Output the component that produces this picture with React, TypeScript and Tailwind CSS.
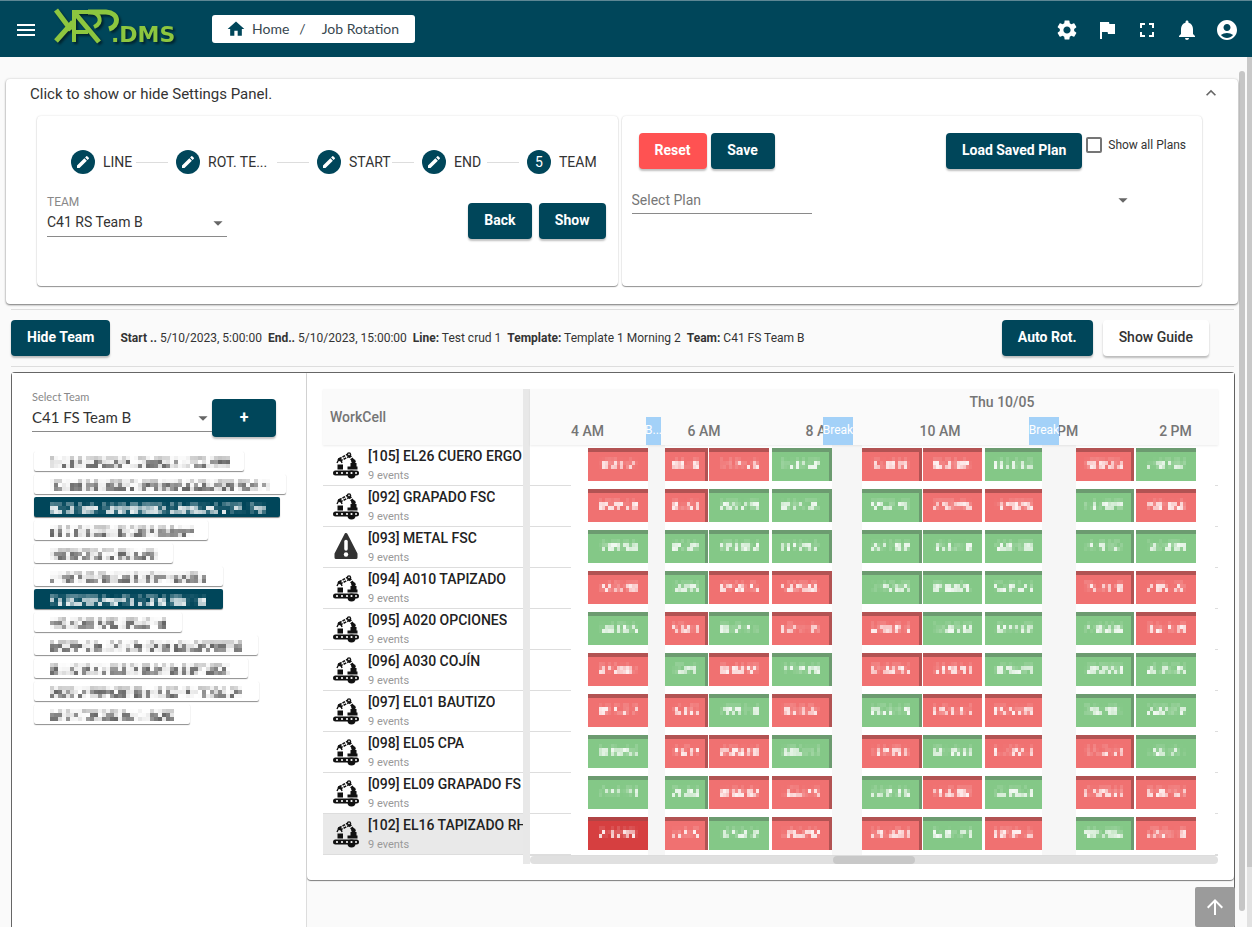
import React, { useState } from 'react';
import {
  MdMenu,
  MdHome,
  MdSettings,
  MdFlag,
  MdFullscreen,
  MdNotifications,
  MdAccountCircle,
  MdEdit,
  MdKeyboardArrowUp,
  MdArrowDropDown,
  MdArrowUpward,
} from 'react-icons/md';
import clsx from 'clsx';

type Step = { label: string; width: string; labelWidth: string };
type WorkCell = { code: string; name: string; events: string; warning?: boolean; selected?: boolean };
type Worker = { width: string; chars: number; active?: boolean };

const steps: Step[] = [
  { label: 'LINE', width: 'w-[105px]', labelWidth: 'w-[33px]' },
  { label: 'ROT. TE...', width: 'w-[141px]', labelWidth: 'w-[69px]' },
  { label: 'START', width: 'w-[105px]', labelWidth: 'w-[43px]' },
  { label: 'END', width: 'w-[105px]', labelWidth: 'w-[33px]' },
  { label: 'TEAM', width: '', labelWidth: '' },
];

// one letter per event, R = red, G = green, S = selected
const workCells: WorkCell[] = [
  { code: '105', name: 'EL26 CUERO ERGO', events: 'RRRGRRGRG' },
  { code: '092', name: 'GRAPADO FSC', events: 'RRGGGRRGR' },
  { code: '093', name: 'METAL FSC', events: 'GGGGGGGGG', warning: true },
  { code: '094', name: 'A010 TAPIZADO', events: 'RGRRGGGRR' },
  { code: '095', name: 'A020 OPCIONES', events: 'GRGRRGGGR' },
  { code: '096', name: 'A030 COJÍN', events: 'RGRGRRGGG' },
  { code: '097', name: 'EL01 BAUTIZO', events: 'RRGRGRRGG' },
  { code: '098', name: 'EL05 CPA', events: 'GRRGRGRRG' },
  { code: '099', name: 'EL09 GRAPADO FS', events: 'GGRRGRGRR' },
  { code: '102', name: 'EL16 TAPIZADO RH', events: 'SRGRRGRGR', selected: true },
];

const workers: Worker[] = [
  { width: 'w-[210px]', chars: 45 },
  { width: 'w-[252px]', chars: 55 },
  { width: 'w-[246px]', chars: 54, active: true },
  { width: 'w-[174px]', chars: 36 },
  { width: 'w-[139px]', chars: 27 },
  { width: 'w-[189px]', chars: 39 },
  { width: 'w-[189px]', chars: 39, active: true },
  { width: 'w-[148px]', chars: 29 },
  { width: 'w-[224px]', chars: 48 },
  { width: 'w-[214px]', chars: 45 },
  { width: 'w-[225px]', chars: 48 },
  { width: 'w-[156px]', chars: 31 },
];

const hours = ['4 AM', '6 AM', '8 AM', '10 AM', '12 PM', '2 PM'];

const breaks = [
  { label: 'B...', start: 116, size: 15 },
  { label: 'Break', start: 293, size: 30 },
  { label: 'Break', start: 499, size: 30 },
];

// timeline slots: -1 = empty, -2 = break, otherwise event index
const slots = [-1, 0, -2, 1, -1, 2, -1, 3, -2, 4, -1, 5, -1, 6, -2, 7, -1, 8, -1];

const noise = (n: number) => {
  const x = Math.sin(n * 12.9898) * 43758.5453;
  return x - Math.floor(x);
};

// Masked personal data, drawn as a mosaic of small blocks
const Mosaic = ({ cols, seed, dense }: { cols: number; seed: number; dense?: boolean }) => {
  const width = dense ? 4 : 3;
  const height = 4;
  const blocks = [];
  for (let c = 0; c < cols; c++) {
    const gap = noise(seed * 31 + c * 5) < 0.25;
    for (let r = 0; r < 3; r++) {
      const n = noise(seed * 97 + c * 7 + r * 3 + 1);
      let opacity = n > 0.4 ? 0.35 + n * 0.55 : n * 0.6;
      if (gap) opacity = n * 0.15;
      if (r === 0) opacity *= dense ? 0.4 : 0.15;
      blocks.push(
        <rect key={`${c}-${r}`} x={c * width} y={r * height} width={width} height={height} fill="currentColor" opacity={opacity} />
      );
    }
  }
  return (
    <svg width={cols * width} height={3 * height} shapeRendering="crispEdges" aria-hidden="true">
      {blocks}
    </svg>
  );
};

const Logo = () => (
  <svg width="128" height="42" viewBox="0 0 128 42" className="ml-4 drop-shadow-[2px_2px_1px_rgba(0,0,0,0.5)]" role="img" aria-label="KAPP.DMS">
    <g fill="none" stroke="#8dc63f">
      <path d="M2 2 L17 22 M2 33 L19 14" strokeWidth="5" />
      <path d="M20 34 V4" strokeWidth="4" />
      <path d="M20 4 L45 34" strokeWidth="5" />
      <path d="M21 24 H34" strokeWidth="4" />
      <path d="M18 4 H36 C47 5 49 15 40 19" strokeWidth="4" />
      <path d="M34 4 H52 C66 5 65 18 55 21" strokeWidth="5" />
    </g>
    <text x="57" y="34" fill="#8dc63f" fontFamily="'DejaVu Sans', sans-serif" fontWeight="700" fontSize="22">.DMS</text>
  </svg>
);

const RobotIcon = () => (
  <svg width="28" height="28" viewBox="0 0 28 28" aria-hidden="true">
    <g fill="none" stroke="#111" strokeWidth="1.6">
      <path d="M7 8 L16 3 M8 10 L17 5.5" strokeDasharray="3 1" />
      <path d="M17 4 L22 11" strokeWidth="3" strokeDasharray="3 1" />
      <path d="M7 8 L5 12 M9 9 L10 12" strokeWidth="1.4" />
    </g>
    <circle cx="17" cy="3.4" r="2.2" fill="#111" />
    <circle cx="17" cy="3.4" r="0.8" fill="#fff" />
    <circle cx="7.5" cy="8.5" r="1.8" fill="#111" />
    <circle cx="21.5" cy="10.5" r="2.2" fill="#111" />
    <path d="M18.5 12 h6 v3.5 h1 v3 H15.5 v-3 h3z M5.5 13.5 h5.5 v5 h-5.5z" fill="#111" />
    <rect x="1" y="19.5" width="26" height="5" rx="2.5" fill="#111" />
    <circle cx="19.5" cy="23.5" r="4" fill="#111" />
    <g fill="#fff">
      <circle cx="5" cy="22" r="1.1" />
      <circle cx="10" cy="22" r="1.1" />
      <circle cx="15" cy="22" r="1.1" />
      <circle cx="19.5" cy="22" r="1.1" />
      <circle cx="24" cy="22" r="1" />
    </g>
  </svg>
);

const WarningIcon = () => (
  <svg width="28" height="29" viewBox="0 0 28 29" aria-hidden="true">
    <path d="M14 1.5 L24 21 V24.5 H4 V21 Z" fill="#333" stroke="#333" strokeWidth="3" strokeLinejoin="round" />
    <path d="M14 8.5 V16" stroke="#fff" strokeWidth="3.5" strokeLinecap="round" />
    <circle cx="14" cy="21.5" r="2.2" fill="#fff" />
  </svg>
);

type ButtonProps = { children: React.ReactNode; className?: string; onClick?: () => void };

const Button = ({ children, className = 'bg-[#00465a] text-white font-bold', onClick }: ButtonProps) => (
  <button
    type="button"
    onClick={onClick}
    className={clsx('h-9 min-w-16 shrink-0 rounded px-4 pb-0.5 text-sm whitespace-nowrap shadow-[0_2px_2px_rgba(0,0,0,0.25)]', className)}
  >
    {children}
  </button>
);

const Header = () => (
  <header className="flex h-[57px] shrink-0 items-center border-t border-[#5d8794] bg-[#00465a] pr-[13px] pl-3.5 text-white">
    <button type="button" aria-label="Menu" className="pt-0.5"><MdMenu size={24} /></button>
    <Logo />
    <nav className="ml-[30px] flex h-7 items-center rounded-[3px] bg-white pr-4 pl-3.5 font-[Lato,sans-serif] text-sm text-[#37474f]">
      <MdHome size={20} className="mr-1.5 text-[#00465a]" />
      <a href="#home">Home</a>
      <span className="ml-2.5">/</span>
      <span className="ml-4">Job Rotation</span>
    </nav>
    <div className="ml-auto flex items-center gap-4 pt-0.5">
      <button type="button" aria-label="Settings"><MdSettings size={24} /></button>
      <button type="button" aria-label="Flag"><MdFlag size={24} /></button>
      <button type="button" aria-label="Full screen"><MdFullscreen size={24} /></button>
      <button type="button" aria-label="Notifications"><MdNotifications size={24} /></button>
      <button type="button" aria-label="Account"><MdAccountCircle size={24} /></button>
    </div>
  </header>
);

const Stepper = () => (
  <ol className="flex pl-6">
    {steps.map((step, i) => (
      <li key={step.label} className={clsx('flex items-center', step.width)}>
        <span className="mr-2 flex size-6 shrink-0 items-center justify-center rounded-full bg-[#00465a] text-sm text-white">
          {i < 4 ? <MdEdit size={16} /> : 5}
        </span>
        <span className={clsx('shrink-0 text-sm whitespace-nowrap', step.labelWidth)}>{step.label}</span>
        {i < 4 && <span className="mr-2 h-px flex-1 bg-[#ddd]" />}
      </li>
    ))}
  </ol>
);

const SettingsPanel = () => {
  const [showAll, setShowAll] = useState(false);
  const panel = 'h-[170px] flex-1 rounded bg-white px-2.5 shadow-[0_1px_1px_rgba(0,0,0,0.4),0_0_2px_rgba(0,0,0,0.15)]';

  return (
    <section className="mt-[22px] mr-px ml-1.5 rounded bg-white pr-9 pb-[18px] pl-[31px] shadow-[0_1px_2px_rgba(0,0,0,0.5),0_0_3px_rgba(0,0,0,0.12)]">
      <button type="button" className="-ml-[7px] flex h-[37px] w-[calc(100%+26px)] items-start justify-between pt-1 text-left text-[15px]">
        <span>Click to show or hide Settings Panel.</span>
        <MdKeyboardArrowUp size={20} className="text-[#666]" />
      </button>
      <div className="flex gap-1">
        <div className={clsx(panel, 'pt-[34px]')}>
          <Stepper />
          <div className="mt-4 flex items-start justify-between">
            <div className="relative w-[180px] border-b border-[#8a8a8a]">
              <label htmlFor="team" className="block pt-1 text-xs text-[#888]">TEAM</label>
              <select id="team" className="h-6 w-full appearance-none bg-transparent pb-1 text-sm">
                <option>C41 RS Team B</option>
              </select>
              <MdArrowDropDown size={22} className="pointer-events-none absolute -right-0.5 bottom-0.5 text-[#666]" />
            </div>
            <div className="mt-[13px] mr-0.5 flex gap-[7px]">
              <Button>Back</Button>
              <Button>Show</Button>
            </div>
          </div>
        </div>

        <div className={clsx(panel, 'pt-[17px]')}>
          <div className="flex items-start gap-1 pr-1.5 pl-[7px]">
            <Button className="bg-[#ff5252] font-bold text-white">Reset</Button>
            <Button>Save</Button>
            <Button className="ml-auto bg-[#00465a] font-bold text-white">Load Saved Plan</Button>
            <label className="mt-1 flex items-center gap-1.5 text-xs whitespace-nowrap">
              <input
                type="checkbox"
                checked={showAll}
                onChange={(e) => setShowAll(e.target.checked)}
                className="size-4 appearance-none rounded-xs border-2 border-[#757575] checked:bg-[#00465a]"
              />
              Show all Plans
            </label>
          </div>
          <div className="relative mt-[19px] w-[508px] max-w-full">
            <select aria-label="Select Plan" className="h-6 w-full appearance-none bg-transparent pb-0.5 text-sm text-[#777]">
              <option>Select Plan</option>
            </select>
            <div className="h-px w-[180px] bg-[#8a8a8a]" />
            <MdArrowDropDown size={22} className="pointer-events-none absolute right-1.5 bottom-[3px] text-[#666]" />
          </div>
        </div>
      </div>
    </section>
  );
};

const InfoBar = () => (
  <section className="mt-[5px] mr-[5px] ml-[11px] flex h-[58px] items-center border-y border-[#ddd]">
    <Button>Hide Team</Button>
    <p className="ml-2.5 flex gap-1.5 text-xs whitespace-nowrap">
      <span><b>Start ..</b> 5/10/2023, 5:00:00</span>
      <span><b>End..</b> 5/10/2023, 15:00:00</span>
      <span><b>Line:</b> Test crud 1</span>
      <span><b>Template:</b> Template 1 Morning 2</span>
      <span><b>Team:</b> C41 FS Team B</span>
    </p>
    <div className="mr-[25px] ml-auto flex gap-2.5">
      <Button>Auto Rot.</Button>
      <Button className="bg-white font-medium text-[#333]">Show Guide</Button>
    </div>
  </section>
);

const TeamSidebar = () => (
  <aside className="w-[295px] shrink-0 border-r border-[#ddd] bg-white pt-4 pl-5">
    <div className="flex items-start">
      <div className="relative w-[180px] border-b border-[#8a8a8a] font-[Lato,sans-serif]">
        <label htmlFor="select-team" className="block text-[11px] leading-4 text-[#888]">Select Team</label>
        <select id="select-team" className="h-[25px] w-full appearance-none bg-transparent pb-1.5 text-[15px]">
          <option>C41 FS Team B</option>
        </select>
        <MdArrowDropDown size={22} className="pointer-events-none absolute -right-0.5 bottom-0.5 text-[#666]" />
      </div>
      <button type="button" aria-label="Add team" className="mt-2.5 h-[38px] w-16 rounded bg-[#00465a] font-bold text-white shadow-[0_2px_2px_rgba(0,0,0,0.25)]">
        +
      </button>
    </div>
    <ul className="mt-3.5 ml-0.5 flex flex-col gap-[3px]">
      {workers.map((worker, i) => (
        <li key={i}>
          <button
            type="button"
            aria-label={`Team member ${i + 1}`}
            className={clsx(
              'flex h-5 items-center rounded-xs pt-0.5 pl-4 shadow-[0_1px_1px_rgba(0,0,0,0.45)]',
              worker.width,
              worker.active ? 'bg-[#00465a] text-white' : 'bg-white text-[#555]'
            )}
          >
            <Mosaic cols={worker.chars} seed={i + 3} dense />
          </button>
        </li>
      ))}
    </ul>
  </aside>
);

const slotGrid = 'grid grid-cols-[58fr_60fr_17fr_43fr_1fr_60fr_3fr_60fr_30fr_60fr_1fr_59fr_3fr_57fr_34fr_58fr_2fr_60fr_22fr]';

const eventColors: Record<string, string> = {
  R: 'bg-[#f07171] border-[#b25353]',
  G: 'bg-[#84c887] border-[#6c9b70]',
  S: 'bg-[#d63f40] border-[#b04445]',
};

const TimelineRow = ({ cell, row }: { cell: WorkCell; row: number }) => (
  <div className={clsx('h-[41px]', slotGrid)}>
    {slots.map((slot, i) => {
      if (slot === -2) return <div key={i} className="bg-[#f6f6f6]" />;
      if (i === 0) return <div key={i} className="mr-[17px] border-b border-[#ddd]" />;
      if (i === slots.length - 1) return <div key={i} className="ml-auto w-[3px] border-b border-[#ddd]" />;
      if (slot === -1) return <div key={i} />;
      return (
        <button
          key={i}
          type="button"
          aria-label={`Event ${slot + 1} of ${cell.name}`}
          className={clsx(
            'mt-[3px] flex h-[33px] min-w-0 items-center justify-center overflow-hidden border-t-4 pb-2 text-white',
            eventColors[cell.events[slot]],
            [1, 3, 4, 7].includes(slot) && 'border-r-[3px]'
          )}
        >
          <Mosaic cols={slot === 1 ? 9 : 13} seed={row * 11 + slot} />
        </button>
      );
    })}
  </div>
);

const Scheduler = () => (
  <div className="rounded-b bg-white px-4 pt-4 pb-4 shadow-[0_1px_1px_rgba(0,0,0,0.5)]">
    <div className="flex">
      <div className="w-[200px] shrink-0">
        <div className="flex h-14 items-center bg-[#fafafa] pl-[7px] text-sm font-medium text-[#757575] shadow-[0_1px_2px_rgba(0,0,0,0.08)]">
          WorkCell
        </div>
        {workCells.map((cell) => (
          <div
            key={cell.code}
            className={clsx('flex h-[41px] overflow-hidden border-b border-[#ddd] pl-[9px]', cell.selected && 'bg-[#e9e9e9]')}
          >
            <div className="mt-1.5 mr-2 shrink-0">{cell.warning ? <WarningIcon /> : <RobotIcon />}</div>
            <div className="overflow-hidden whitespace-nowrap">
              <div className="pt-0.5 text-sm leading-[18px] font-medium text-[#222]">[{cell.code}] {cell.name}</div>
              <div className="text-[11px] leading-[22px] text-[#999]">9 events</div>
            </div>
          </div>
        ))}
      </div>
      <div className="w-[7px] shrink-0 bg-[#e8e8e8]" />
      <div className="min-w-0 flex-1">
        <div className="relative flex h-14 flex-col bg-[#fafafa] text-sm font-medium text-[#757575] shadow-[0_1px_2px_rgba(0,0,0,0.08)]">
          <div className="h-7 pl-64 text-center leading-[26px]">Thu 10/05</div>
          <div className="grid h-7 grid-cols-[115fr_118fr_118fr_118fr_118fr_101fr] text-center leading-7">
            {hours.map((hour, i) => (
              <div key={hour} className={clsx('whitespace-nowrap', i === 5 && 'pl-4')}>{hour}</div>
            ))}
          </div>
          {breaks.map((b) => (
            <div
              key={b.start}
              className="absolute bottom-0 flex h-7 justify-center overflow-hidden bg-[#a3d1f8] text-xs leading-[26px] font-normal whitespace-nowrap text-white"
              style={{ left: `${(b.start / 688) * 100}%`, width: `${(b.size / 688) * 100}%` }}
            >
              {b.label}
            </div>
          ))}
        </div>
        {workCells.map((cell, row) => (
          <TimelineRow key={cell.code} cell={cell} row={row} />
        ))}
        <div className="h-[9px] border-t border-[#ddd]">
          <div className="flex h-2 rounded-full bg-[#e0e0e0]">
            <div className="ml-[44%] w-[12%] rounded-full bg-[#c8c8c8]" />
          </div>
        </div>
      </div>
    </div>
  </div>
);

export default function App() {
  return (
    <div className="flex h-screen flex-col overflow-hidden bg-[#fafafa] font-[Roboto,sans-serif] text-[#333]">
      <Header />
      <div className="flex min-h-0 flex-1">
        <main className="relative flex min-w-0 flex-1 flex-col">
          <SettingsPanel />
          <InfoBar />
          <section className="mt-[5px] mr-1 ml-[11px] flex min-h-0 flex-1 rounded-t border border-b-0 border-[#666]">
            <TeamSidebar />
            <div className="min-w-0 flex-1">
              <Scheduler />
            </div>
          </section>
          <button
            type="button"
            aria-label="Back to top"
            className="absolute right-1 bottom-0 flex size-10 items-center justify-center rounded-xs bg-[#9b9b9b] text-white"
          >
            <MdArrowUpward size={24} />
          </button>
        </main>
        <div className="w-2 shrink-0 pt-3.5 pr-0.5 pb-4">
          <div className="h-full rounded-full bg-[#c6c6c6]" />
        </div>
        <div className="w-[5px] shrink-0 bg-[#e2e2e2] pb-[60px]">
          <div className="h-full bg-[#c8c8c8]" />
        </div>
      </div>
    </div>
  );
}
